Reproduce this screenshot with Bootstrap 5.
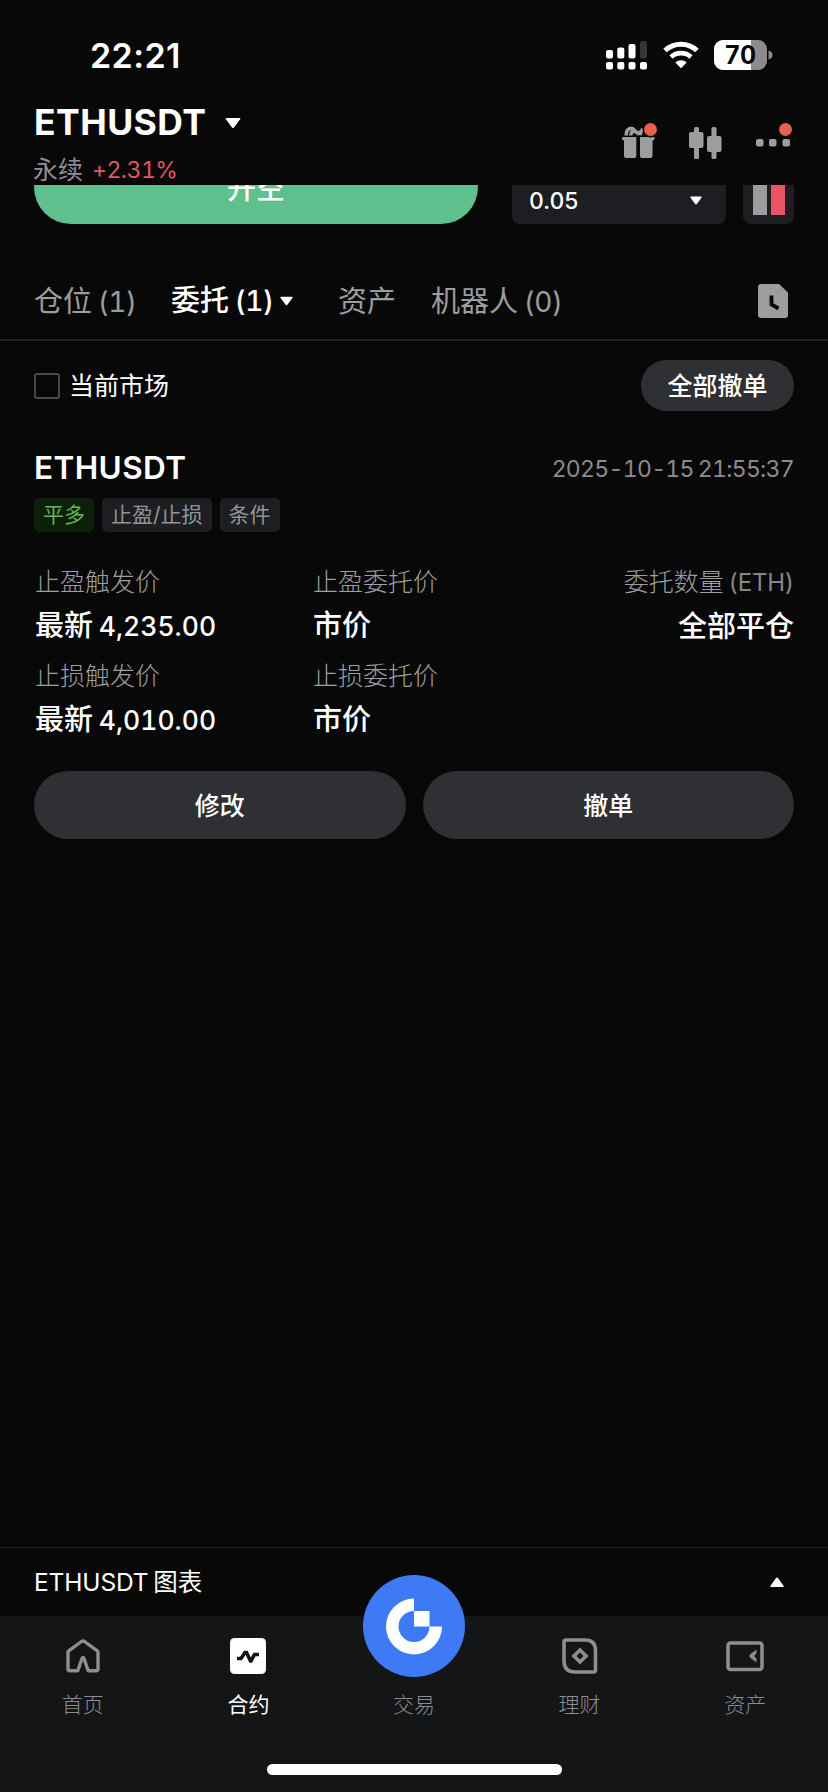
<!DOCTYPE html>
<html lang="zh-CN" data-bs-theme="dark">
<head>
<meta charset="utf-8">
<meta name="viewport" content="width=device-width, initial-scale=1">
<title>ETHUSDT 永续</title>
<link href="https://cdn.jsdelivr.net/npm/bootstrap@5.3.0/dist/css/bootstrap.min.css" rel="stylesheet">
<style>
  :root { --ink:#fff; --dim:#9b9d9f; --faint:#9d9fa1; --pill:#2f3033; }
  body { background:#080808; color:var(--ink); font-family:Inter,"Noto Sans CJK SC",sans-serif; font-feature-settings:"tnum"; font-size:25px; line-height:30px; }
  svg { display:block; flex:none; }
  .screen { height:1792px; overflow:hidden; }
  .gutter { padding-left:34px; padding-right:34px; }
  .status { height:97px; padding:0 55px 0 90px; }
  .signals { padding-top:40px; }
  .clock { font-size:34px; font-weight:600; letter-spacing:.4px; padding-top:14px; line-height:83px; font-feature-settings:normal; }
  .charge { width:59px; height:30px; }
  .charge-txt { font-size:25px; font-weight:700; line-height:30px; left:0; top:0; width:52px; text-align:center; color:#080808; letter-spacing:-.5px; }
  .topbar { height:88px; }
  .pair { font-size:35.5px; font-weight:700; line-height:40px; padding:6px 0 0 0; gap:19px; letter-spacing:.45px; }
  .sub { line-height:26px; padding-top:14px; margin-left:-1px; gap:9px; color:#8f9092; }
  .chg { font-size:23px; color:#e0566b; letter-spacing:-.5px; }
  .clipped { height:39px; overflow:hidden; }
  .short { width:444px; height:74px; border-radius:37px; background:#5fc08d; color:#fff; font-size:29px; font-weight:500; padding-top:3px; }
  .step { width:214px; height:52px; border-radius:8px; background:#1d1e21; font-size:23px; font-weight:500; letter-spacing:-.3px; padding:5px 24px 0 17px; }
  .depth { width:51px; height:52px; border-radius:8px; background:#1d1e21; gap:4px; padding:0 0 9px; margin-left:17px; }
  .depth i { width:14px; height:40px; background:#9b9d9f; }
  .depth i + i { background:#e95565; }
  .tabs { height:117px; font-size:29px; color:var(--dim); border-bottom:2px solid #1f2021; padding-top:36px; line-height:84px; }
  .tabs small { font-size:28px; letter-spacing:-.4px; margin-left:-2px; }
  .tabs .on { width:166px; gap:6px; font-weight:500; color:#fff; margin-left:-1px; margin-right:1px; padding-top:2px; }
  .filter { height:94px; padding-bottom:6px; }
  .filter label { gap:9px; padding-top:1px; }
  .cbx { width:26px; height:26px; border:2px solid #48494b; border-radius:3px; }
  .btn-grey { --bs-btn-bg:var(--pill); --bs-btn-color:#fff; --bs-btn-border-width:0; --bs-btn-border-radius:40px; --bs-btn-font-size:25px; --bs-btn-font-weight:500; line-height:30px; padding:1px 0 0; }
  .all { width:153px; height:51px; }
  .ttl { font-size:31.5px; font-weight:600; line-height:40px; letter-spacing:.4px; }
  .stamp { font-size:23px; color:#8b8c8e; letter-spacing:-.7px; word-spacing:-1.5px; padding-top:1px; }
  .order { padding-top:13px; }
  .tags { gap:8px; padding-top:10px; }
  .tag { height:34px; line-height:33px; font-size:21px; border-radius:5px; padding:0 9px; background:#1c1e22; color:#929497; }
  .tag.long { background:#0b1f09; color:#60b951; }
  .facts { padding-top:28px; display:grid; grid-template-columns:278px 1fr auto; padding-left:1px; }
  .fact { height:94px; }
  .k { line-height:44px; color:var(--faint); font-weight:300; }
  .k span { font-size:24px; font-weight:400; letter-spacing:-.2px; margin-left:-2px; color:#858789; }
  .v { line-height:43px; font-size:29px; font-weight:500; }
  .v span { font-size:26.5px; margin-left:-2px; }
  .acts { gap:17px; padding-top:23px; }
  .acts .btn { height:68px; }
  .chartbar { height:69px; border-top:1px solid #242526; font-size:24.5px; padding-right:44px; letter-spacing:-.15px; word-spacing:-1.5px; }
  .dock { height:176px; background:#141517; }
  .dock a { flex:1 1 0; color:#8c8e90; text-decoration:none; font-size:21px; font-weight:300; }
  .dock a.on { color:#fff; font-weight:400; }
  .ico { height:72px; }
  .dock .lbl { line-height:34px; }
  .orb { width:102px; height:102px; top:-41px; left:50%; margin-left:-51px; }
  .homebar { width:295px; height:11px; border-radius:6px; background:#fff; margin:42px auto 0; }
</style>
</head>
<body>
<div class="screen d-flex flex-column">
  <div class="status d-flex justify-content-between">
    <div class="clock">22:21</div>
    <div class="signals d-flex align-items-start">
      <svg class="me-3" width="41" height="30" viewBox="0 0 41 30" fill="#fff"><rect x="0" y="10" width="7" height="8.500" rx="2"/><rect x="11.300" y="7.500" width="7" height="11" rx="2"/><rect x="22.500" y="4" width="7" height="14.500" rx="2"/><rect x="34" y="1" width="7" height="17.500" rx="2" fill="#363638"/><rect x="0" y="22" width="7" height="7.500" rx="2"/><rect x="11.300" y="22" width="7" height="7.500" rx="2"/><rect x="22.500" y="22" width="7" height="7.500" rx="2"/><rect x="34" y="22" width="7" height="7.500" rx="2"/></svg>
      <svg width="51" height="30" viewBox="0 0 51 30" fill="none" stroke="#fff"><path d="M2 10.500a23.500 23.500 0 0 1 32 0" stroke-width="5"/><path d="M8 17a14.800 14.800 0 0 1 20 0" stroke-width="4.600"/><path d="M18 28.300l-5.700-5.800a8.300 8.300 0 0 1 11.400 0z" fill="#fff" stroke="none"/></svg>
      <div class="charge position-relative">
        <svg width="59" height="30" viewBox="0 0 59 30"><defs><clipPath id="b"><rect width="53" height="30" rx="9"/></clipPath></defs><g clip-path="url(#b)"><rect width="53" height="30" fill="#8c8c8c"/><rect width="37" height="30" fill="#fff"/></g><path d="M54.500 10.500q4 1.300 4 4.500t-4 4.500z" fill="#8c8c8c"/></svg>
        <div class="charge-txt position-absolute">70</div>
      </div>
    </div>
  </div>

  <header class="topbar gutter d-flex justify-content-between">
    <div>
      <div class="pair d-flex align-items-center">ETHUSDT<svg width="16" height="12" viewBox="0 0 16 12" fill="#fff"><path d="M1.500 1h13q1.500 0 .6 1.200L9 10.500q-1 1.200-2 0L.9 2.200Q0 1 1.500 1z"/></svg></div>
      <div class="sub d-flex align-items-center"><span>永续</span><span class="chg">+2.31%</span></div>
    </div>
    <div class="d-flex" style="padding-top:26px">
      <svg width="67" height="36" viewBox="0 0 67 36"><path d="M2 17.500q-2 0-2-2v-1Q0 14 2 14h12.300v19q0 2-2 2H4.500Q2 35 2 33zM18 14h14.500v1.500q0 2-2 2V33q0 2-2 2H20q-2 0-2-2z" fill="#9b9d9f"/><path d="M4.200 12.500C4 4.500 10 4 13 7.800S19.500 9.500 21 5.500M13 8.500Q8.500 8 9 12.500" fill="none" stroke="#9b9d9f" stroke-width="3.600"/><path d="M14 12.200l6-6v6z" fill="#9b9d9f"/><circle cx="28.500" cy="6.500" r="8" fill="#080808"/><circle cx="28.500" cy="6.500" r="6.500" fill="#e75f4d"/></svg>
      <svg width="67" height="36" viewBox="0 0 67 36" fill="#9b9d9f"><rect x="5" y="4" width="5" height="32" rx="1.500"/><rect x="0" y="9" width="14.500" height="16" rx="2"/><rect x="22.500" y="4" width="5" height="32" rx="1.500"/><rect x="18" y="13" width="14.500" height="16" rx="2"/></svg>
      <svg width="38" height="36" viewBox="0 0 38 36" fill="#9b9d9f"><rect x="0" y="16" width="7.500" height="7.500" rx="2"/><rect x="13" y="16" width="7.500" height="7.500" rx="2"/><rect x="26.500" y="16" width="7.500" height="7.500" rx="2"/><circle cx="29.500" cy="6.500" r="6.500" fill="#e75f4d"/></svg>
    </div>
  </header>

  <div class="clipped gutter d-flex align-items-end">
    <div class="short d-flex align-items-center justify-content-center">开空</div>
    <div class="step d-flex align-items-center justify-content-between ms-auto">0.05<svg width="12" height="9" viewBox="0 0 12 9" fill="#fff"><path d="M1.200.5h9.600q1.600 0 .6 1.300L7 7.800q-1 1.200-2 0L.6 1.800Q-.4.500 1.200.5z"/></svg></div>
    <div class="depth d-flex align-items-end justify-content-center"><i></i><i></i></div>
  </div>

  <nav class="tabs gutter d-flex">
    <span style="width:138px">仓位 <small>(1)</small></span>
    <span class="on d-flex align-items-center"><span>委托 <small>(1)</small></span><svg width="13" height="10" viewBox="0 0 12 9" fill="#fff"><path d="M1.200.5h9.600q1.600 0 .6 1.300L7 7.800q-1 1.200-2 0L.6 1.800Q-.4.500 1.200.5z"/></svg></span>
    <span style="width:93px">资产</span>
    <span>机器人 <small>(0)</small></span>
    <svg class="ms-auto mt-4" width="36" height="34" viewBox="0 0 36 34"><path d="M3 0h18l9 8.500V31q0 3-3 3H3q-3 0-3-3V3q0-3 3-3z" fill="#9b9d9f"/><path d="M13.500 11.500v9l7 4" fill="none" stroke="#080808" stroke-width="3.800"/></svg>
  </nav>

  <div class="filter gutter d-flex align-items-center justify-content-between">
    <label class="d-flex align-items-center"><span class="cbx"></span>当前市场</label>
    <button class="btn btn-grey all">全部撤单</button>
  </div>

  <section class="order gutter">
    <div class="d-flex justify-content-between align-items-center"><div class="ttl">ETHUSDT</div><div class="stamp">2025-10-15 21:55:37</div></div>
    <div class="tags d-flex"><span class="tag long">平多</span><span class="tag">止盈/止损</span><span class="tag">条件</span></div>
    <div class="facts">
      <div class="fact"><div class="k">止盈触发价</div><div class="v">最新 <span>4,235.00</span></div></div>
      <div class="fact"><div class="k">止盈委托价</div><div class="v">市价</div></div>
      <div class="fact text-end"><div class="k">委托数量 <span>(ETH)</span></div><div class="v">全部平仓</div></div>
      <div class="fact"><div class="k">止损触发价</div><div class="v">最新 <span>4,010.00</span></div></div>
      <div class="fact"><div class="k">止损委托价</div><div class="v">市价</div></div>
    </div>
    <div class="acts d-flex"><button class="btn btn-grey flex-fill">修改</button><button class="btn btn-grey flex-fill">撤单</button></div>
  </section>

  <div class="chartbar gutter d-flex align-items-center justify-content-between mt-auto">
    <span>ETHUSDT 图表</span>
    <svg width="14" height="10" viewBox="0 0 14 10" fill="#fff"><path d="M1.500 10q-2 0-.8-1.500L6 1q1-1.200 2 0l5.300 7.500Q14.500 10 12.500 10z"/></svg>
  </div>
  <nav class="dock">
    <div class="d-flex text-center">
      <a href="#"><div class="ico d-flex justify-content-center"><svg width="34" height="60" viewBox="0 0 34 60" fill="none" stroke="#8c8e90" stroke-width="3.400" stroke-linejoin="round"><path d="M2 36.500V53q0 1.700 1.700 1.700h8.100L16 42.500q1-2 2 0l4.200 12.200h8.100q1.700 0 1.700-1.700V36.500q0-1-1-1.800L18.500 25.500q-1.500-1-3 0L3 34.700q-1 .8-1 1.800z"/></svg></div><div class="lbl">首页</div></a>
      <a href="#" class="on"><div class="ico d-flex justify-content-center"><svg width="36" height="60" viewBox="0 0 36 60"><rect y="22" width="36" height="36" rx="4.500" fill="#fff"/><path d="M7 42.500h4l4-6h1.500l4 8.500H21l3.500-6.500H29" fill="none" stroke="#141517" stroke-width="3.600"/></svg></div><div class="lbl">合约</div></a>
      <a href="#" class="position-relative"><div class="ico"><svg class="orb position-absolute" viewBox="0 0 102 102"><circle cx="51" cy="51" r="51" fill="#3e7af5"/><path d="M51 23.500A28 28 0 1 0 79 51.500H66.500A15.500 15.500 0 1 1 51 36zM51 36h15.500v15.500H51z" fill="#fff"/></svg></div><div class="lbl">交易</div></a>
      <a href="#"><div class="ico d-flex justify-content-center"><svg width="36" height="60" viewBox="0 0 36 60" fill="none" stroke="#8c8e90" stroke-width="3.600"><path d="M4 24h19q10.500 0 10.500 10.500V54q0 2-2 2H13Q2 56 2 45V26q0-2 2-2z"/><path d="M18 34l6 6-6 6-6-6z"/></svg></div><div class="lbl">理财</div></a>
      <a href="#"><div class="ico d-flex justify-content-center"><svg width="38" height="60" viewBox="0 0 38 60" fill="none" stroke="#8c8e90" stroke-width="3.600"><rect x="2" y="27" width="34" height="26.500" rx="2.500"/><path d="M30.500 33.500v4L28 40l2.500 2.500v4L24 41.500q-1.500-1.500 0-3z" fill="#8c8e90" stroke="none"/></svg></div><div class="lbl">资产</div></a>
    </div>
    <div class="homebar"></div>
  </nav>
</div>
<script src="https://cdn.jsdelivr.net/npm/bootstrap@5.3.0/dist/js/bootstrap.bundle.min.js"></script>
</body>
</html>
